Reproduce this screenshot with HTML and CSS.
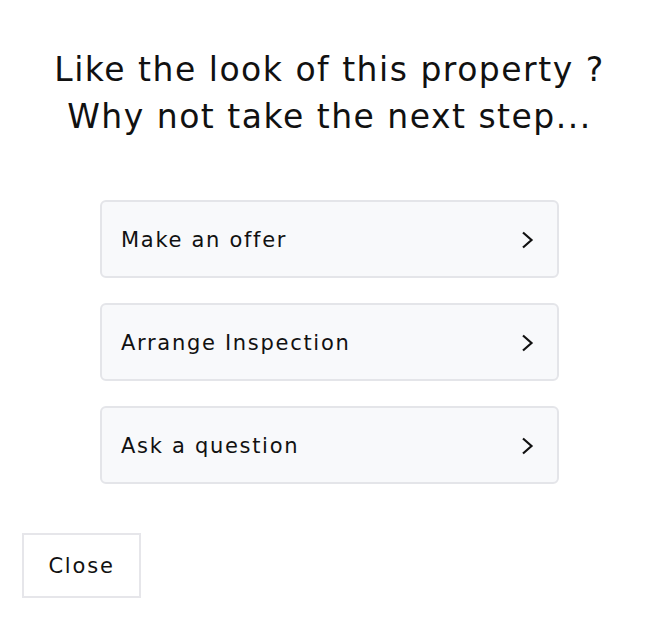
FILE: index.html
```html
<!DOCTYPE html>
<html>
<head>
<meta charset="utf-8">
<link rel="stylesheet" href="styles.css">
</head>
<body>
<div class="modal">
  <h1 class="title">Like the look of this property ?<br>Why not take the next step...</h1>
  <div class="options">
    <button class="option"><span>Make an offer</span><svg class="chev" width="14" height="18" viewBox="0 0 14 18"><path d="M3 1.5 L11.5 9 L3 16.5" fill="none" stroke="#111" stroke-width="2.2"/></svg></button>
    <button class="option"><span>Arrange Inspection</span><svg class="chev" width="14" height="18" viewBox="0 0 14 18"><path d="M3 1.5 L11.5 9 L3 16.5" fill="none" stroke="#111" stroke-width="2.2"/></svg></button>
    <button class="option"><span>Ask a question</span><svg class="chev" width="14" height="18" viewBox="0 0 14 18"><path d="M3 1.5 L11.5 9 L3 16.5" fill="none" stroke="#111" stroke-width="2.2"/></svg></button>
  </div>
  <div class="footer">
    <button class="close">Close</button>
  </div>
</div>
</body>
</html>
```
FILE: styles.css
```css
html, body {
  margin: 0;
  padding: 0;
  background: #fff;
}
body {
  font-family: "DejaVu Sans", sans-serif;
  color: #111;
}
.modal {
  padding: 46px 24px 0 22px;
}
.title {
  margin: 0;
  text-align: center;
  font-weight: 400;
  font-size: 33px;
  letter-spacing: 1.5px;
  line-height: 47px;
  color: #111;
}
.options {
  display: flex;
  flex-direction: column;
  gap: 25px;
  width: 459px;
  margin: 60px auto 0;
}
.option {
  display: flex;
  align-items: center;
  justify-content: space-between;
  height: 78px;
  box-sizing: border-box;
  padding: 2px 23px 0 19px;
  background: #f8f9fb;
  border: 2px solid #e4e5e9;
  border-radius: 6px;
  font-family: inherit;
  font-size: 21px;
  letter-spacing: 1.7px;
  color: #111;
  text-align: left;
}
.chev {
  display: block;
}
.footer {
  margin-top: 49px;
}
.close {
  width: 119px;
  height: 65px;
  box-sizing: border-box;
  background: #fff;
  border: 2px solid #e6e6ea;
  border-radius: 0;
  font-family: inherit;
  font-size: 21px;
  letter-spacing: 1.8px;
  color: #111;
}
```
